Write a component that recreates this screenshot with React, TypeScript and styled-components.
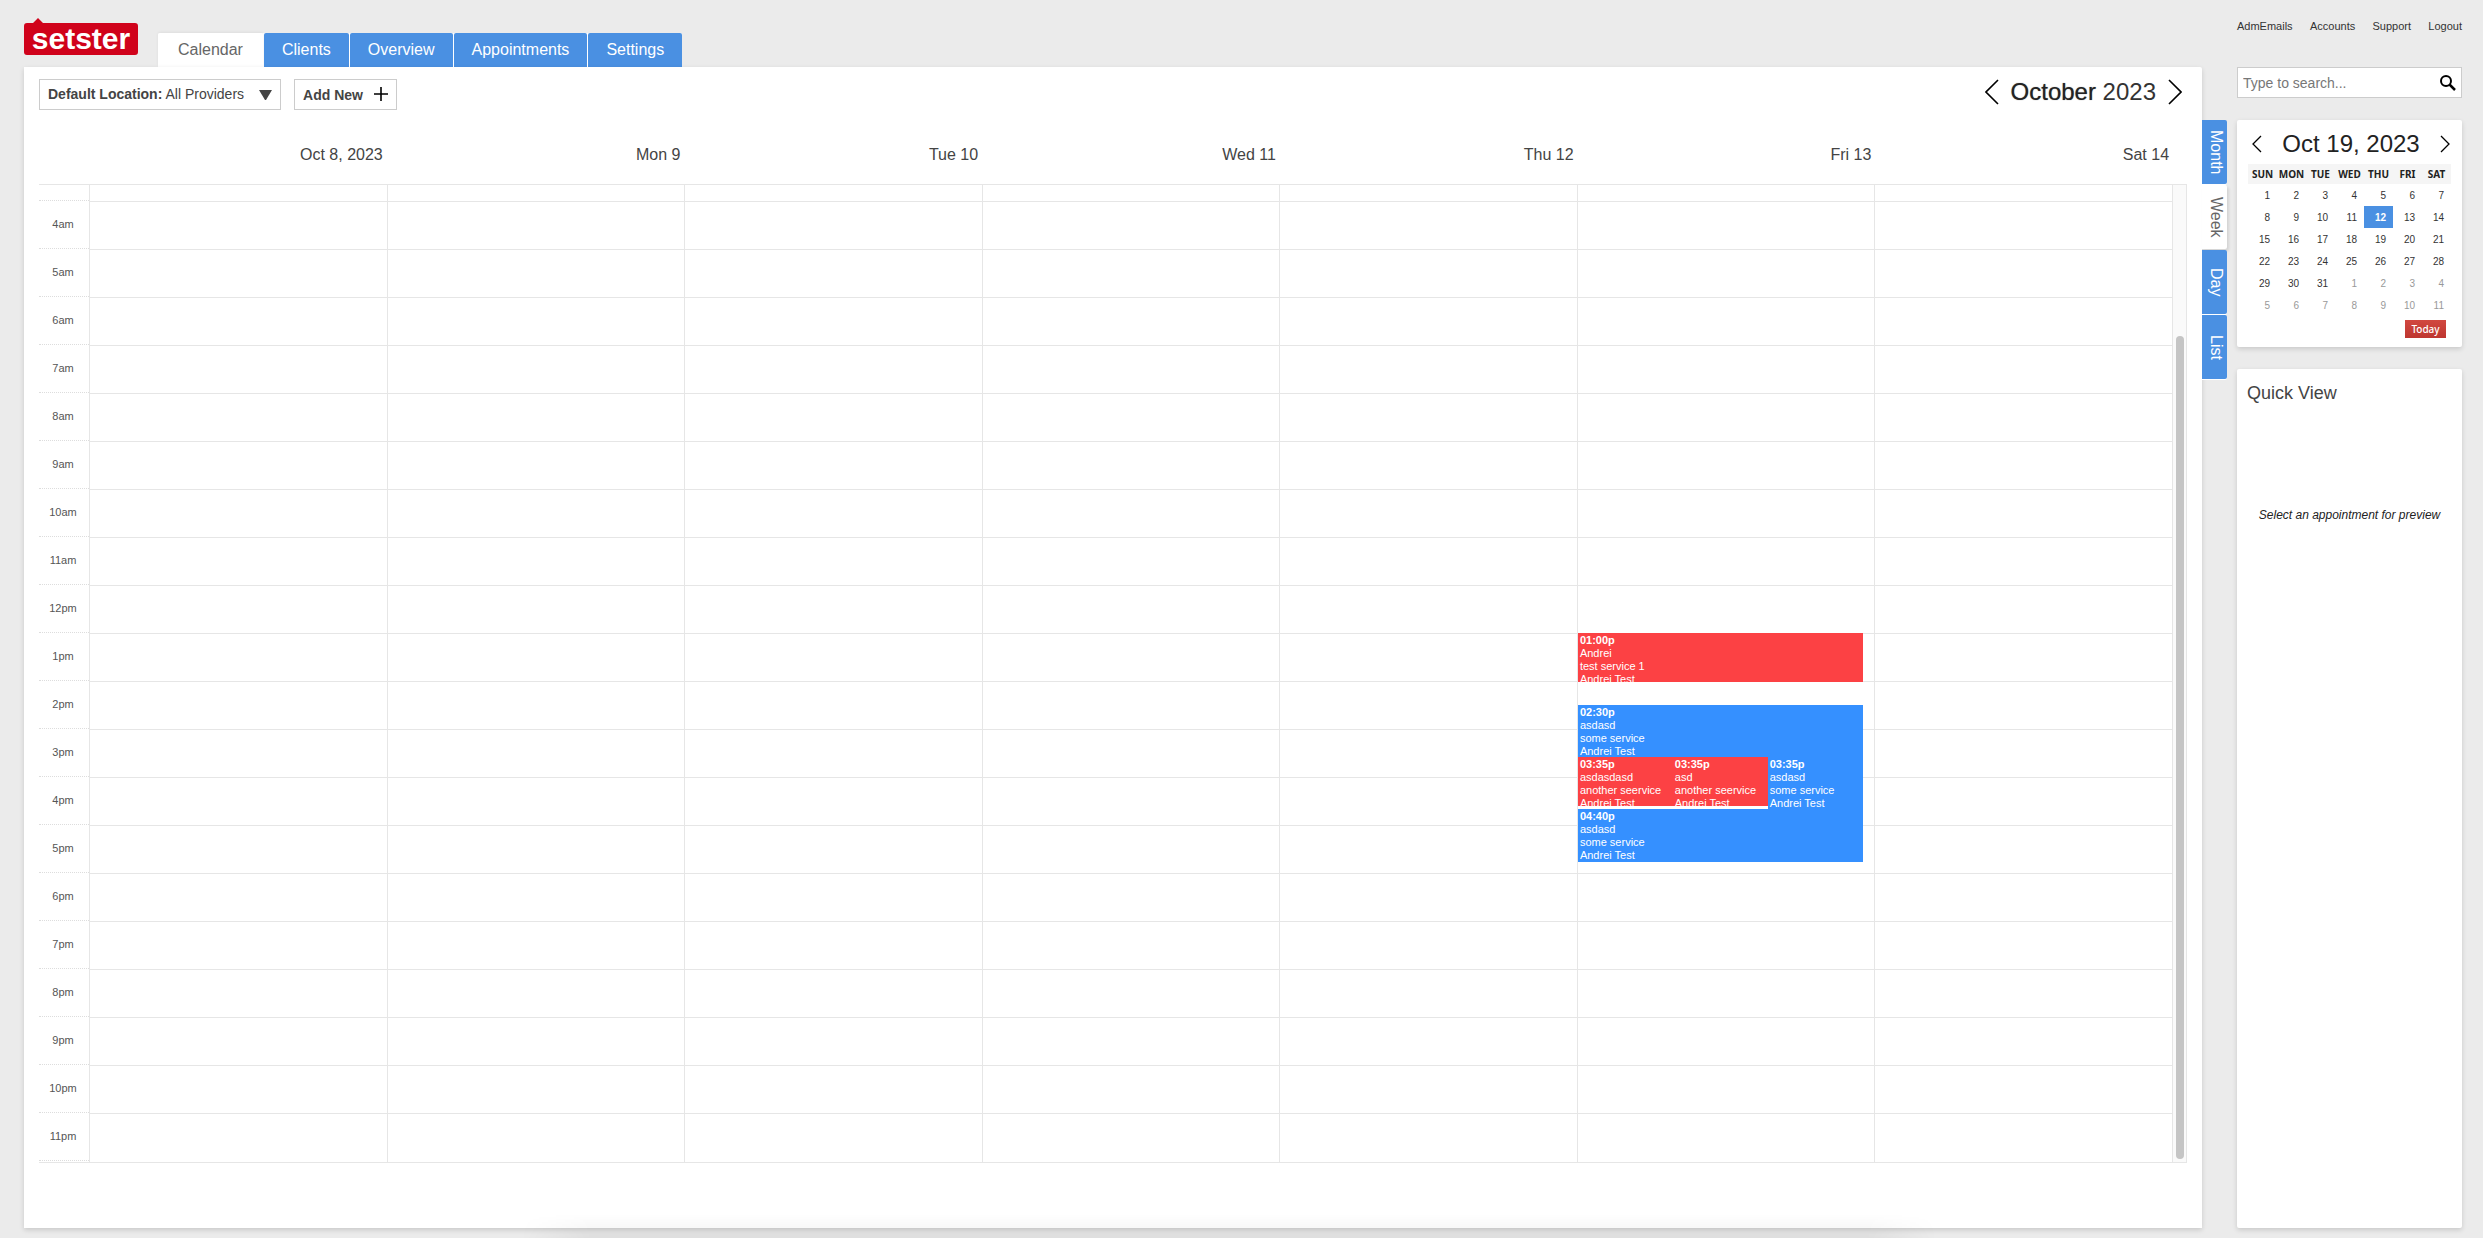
import React from "react";
import styled, { createGlobalStyle, css } from "styled-components";

const GlobalStyle = createGlobalStyle`
  *, *::before, *::after { box-sizing: border-box; }
  body {
    margin: 0;
    background: #ebebeb;
    color: #444;
    font-family: "Liberation Sans", Arial, sans-serif;
    font-size: 11px;
  }
  button, input { font-family: inherit; }
  button { cursor: pointer; }
  a { color: inherit; text-decoration: none; }
`;

const SHADOW = "0 2px 5px rgba(0, 0, 0, 0.15)";
const BLUE = "#4a90e2";
const LINE = "#e6e6e6";
const HOUR = 48;
const FIRST_HOUR = 4;
const LEAD = 16;

const Page = styled.div`
  position: relative;
  display: flex;
  min-height: 100vh;
  padding: 0 21px 10px 24px;
  &::after {
    position: absolute;
    right: 22%;
    bottom: 0;
    left: 21%;
    height: 24px;
    background: linear-gradient(transparent, rgba(0, 0, 0, 0.05));
    mask-image: linear-gradient(90deg, transparent, #000 5%, #000 95%, transparent);
    content: "";
    pointer-events: none;
  }
`;

const MainColumn = styled.div`
  display: flex;
  flex: 1;
  flex-direction: column;
  min-width: 0;
`;

const Header = styled.header`
  display: flex;
  align-items: flex-end;
  height: 67px;
`;

const Logo = styled.a`
  display: flex;
  width: 114px;
  margin: 0 20px 12px 0;
`;

const Tabs = styled.nav`
  display: flex;
  gap: 1px;
  border-radius: 2px 2px 0 0;
  background: #fff;
`;

const Tab = styled.a<{ $active?: boolean }>`
  display: flex;
  align-items: center;
  height: 34px;
  padding: 0 ${(p) => (p.$active ? 20 : 18)}px;
  border-radius: 2px 2px 0 0;
  background: ${(p) => (p.$active ? "#fff" : BLUE)};
  box-shadow: ${(p) => (p.$active ? "0 -1px 3px rgba(0, 0, 0, 0.06)" : "none")};
  color: ${(p) => (p.$active ? "#666" : "#fff")};
  font-size: 16px;
`;

const Panel = styled.main`
  display: flex;
  flex: 1;
  flex-direction: column;
  padding: 12px 15px 65px;
  border-radius: 0 2px 0 0;
  background: #fff;
  box-shadow: ${SHADOW};
`;

const Toolbar = styled.div`
  display: flex;
  align-items: center;
  gap: 13px;
  height: 31px;
`;

const BoxButton = styled.button`
  display: flex;
  align-items: center;
  height: 31px;
  padding: 0 8px 2px;
  border: 1px solid #ccc;
  background: #fff;
  color: #444;
  font-size: 14px;
  white-space: pre;
  svg { margin: 2px 0 0 15px; }
`;

const AddButton = styled(BoxButton)`
  padding-bottom: 0;
  font-weight: bold;
  svg { margin: 0 0 2px 11px; }
`;

const MonthNav = styled.div`
  display: flex;
  align-items: center;
  align-self: flex-start;
  gap: 12px;
  margin: 0 5px 0 auto;
`;

const MonthTitle = styled.h1`
  margin: 0;
  color: #333;
  font-size: 24px;
  font-weight: normal;
  line-height: 26px;
  span {
    color: #222;
    text-shadow: 0 0 1px #777;
  }
`;

const IconButton = styled.button`
  display: flex;
  padding: 0;
  border: 0;
  background: none;
  color: #000;
`;

const DayHeads = styled.div`
  display: flex;
  height: 74px;
  padding: 0 18px 0 46px;
  span {
    flex: 1;
    color: #444;
    font-size: 16px;
    line-height: 90px;
    text-align: right;
  }
`;

const Grid = styled.div`
  display: flex;
  border: solid ${LINE};
  border-width: 1px 0;
`;

const Hours = styled.div`
  width: 50px;
`;

const HourLabel = styled.div<{ $lead?: boolean }>`
  height: ${(p) => (p.$lead ? LEAD : HOUR)}px;
  padding-right: 2px;
  border-bottom: 1px dotted #ddd;
  color: #555;
  font-size: 11px;
  line-height: 46px;
  text-align: center;
`;

const Day = styled.div`
  position: relative;
  flex: 1;
  border-left: 1px solid ${LINE};
`;

const Slot = styled.div<{ $lead?: boolean }>`
  height: ${(p) => (p.$lead ? LEAD : HOUR)}px;
  ${(p) => !p.$lead && css`border-top: 1px solid ${LINE};`}
  &:last-child { height: ${HOUR + 1}px; }
`;

const EventBox = styled.button<{ $red?: boolean }>`
  position: absolute;
  display: block;
  height: ${(p) => (p.$red ? 49 : 53)}px;
  padding: 1px 2px 0;
  border: 0;
  overflow: hidden;
  background: ${(p) => (p.$red ? "#fc4144" : "#3590ff")};
  color: #fff;
  font-size: 11px;
  line-height: 13px;
  text-align: left;
  span, b {
    display: block;
    white-space: nowrap;
  }
`;

const EventText = styled.span`
  height: 52px;
`;

const ScrollTrack = styled.div`
  display: flex;
  flex-direction: column;
  justify-content: flex-end;
  width: 15px;
  padding: 0 2px 3px 3px;
  border: solid ${LINE};
  border-width: 0 1px;
  background: #fafafa;
`;

const ScrollThumb = styled.div`
  height: 84.5%;
  border-radius: 4px;
  background: #c5c5c5;
`;

const ViewTabs = styled.nav`
  display: flex;
  flex-direction: column;
  gap: 1px;
  width: 25px;
  margin: 120px 10px 0 0;
`;

const ViewTab = styled.a<{ $active?: boolean }>`
  display: flex;
  align-items: center;
  justify-content: center;
  width: 25px;
  height: 64px;
  padding-left: 2px;
  border-radius: 0 2px 2px 0;
  background: ${(p) => (p.$active ? "#fff" : BLUE)};
  box-shadow: ${(p) => (p.$active ? "2px 2px 3px rgba(0, 0, 0, 0.1)" : "0 1px 0 #fff")};
  color: ${(p) => (p.$active ? "#666" : "#fff")};
  font-size: 16px;
  writing-mode: vertical-rl;
`;

const Side = styled.aside`
  display: flex;
  flex-direction: column;
  width: 225px;
`;

const UserLinks = styled.nav`
  display: flex;
  justify-content: space-between;
  height: 67px;
  color: #333;
  font-size: 11px;
  line-height: 53px;
`;

const Search = styled.form`
  display: flex;
  align-items: center;
  height: 31px;
  margin-bottom: 22px;
  padding: 0 5px;
  border: 1px solid #ccc;
  background: #fff;
`;

const SearchInput = styled.input`
  flex: 1;
  min-width: 0;
  padding: 0;
  border: 0;
  outline: 0;
  background: none;
  color: #444;
  font-size: 14px;
  &::placeholder { color: #777; }
`;

const Card = styled.section<{ $grow?: boolean }>`
  flex: ${(p) => (p.$grow ? 1 : "none")};
  margin-bottom: ${(p) => (p.$grow ? 0 : 22)}px;
  padding: ${(p) => (p.$grow ? "11px 10px" : "10px 11px 9px")};
  border-radius: 2px;
  background: #fff;
  box-shadow: ${SHADOW};
`;

const MiniHead = styled.div`
  display: flex;
  align-items: center;
  justify-content: space-between;
  height: 34px;
  padding: 0 1px 6px 4px;
  color: #222;
  font-size: 24px;
`;

const MiniTable = styled.table`
  width: 100%;
  border-collapse: collapse;
  table-layout: fixed;
  th {
    height: 20px;
    padding: 0;
    background: #f5f5f5;
    color: #222;
    font: bold 10px/20px "Noto Sans", sans-serif;
    text-align: center;
  }
`;

const MiniDay = styled.td<{ $other: boolean; $selected: boolean }>`
  height: 22px;
  padding: 0 7px 0 0;
  background: ${(p) => (p.$selected ? BLUE : "none")};
  color: ${(p) => (p.$selected ? "#fff" : p.$other ? "#999" : "#333")};
  font-size: 10px;
  font-weight: ${(p) => (p.$selected ? "bold" : "normal")};
  text-align: right;
`;

const TodayButton = styled.button`
  display: block;
  width: 41px;
  height: 18px;
  margin: 4px 5px 0 auto;
  padding: 0;
  border: 0;
  background: linear-gradient(#d14840, #be3630);
  color: #fff;
  font: 500 10px/18px "Noto Sans", sans-serif;
`;

const QuickTitle = styled.h2`
  margin: 0;
  color: #444;
  font-size: 18px;
  font-weight: normal;
  line-height: 26px;
`;

const QuickHint = styled.p`
  margin: 100px 0 0;
  color: #222;
  font-size: 12px;
  font-style: italic;
  line-height: 18px;
  text-align: center;
`;

function Chevron({ width, height, right }: { width: number; height: number; right?: boolean }) {
  const d = right
    ? `M1 1L${width - 1} ${height / 2}L1 ${height - 1}`
    : `M${width - 1} 1L1 ${height / 2}L${width - 1} ${height - 1}`;
  return (
    <svg width={width} height={height} fill="none" stroke="currentColor" strokeWidth={height > 20 ? 1.6 : 1.3} aria-hidden>
      <path d={d} />
    </svg>
  );
}

const NAV = ["Calendar", "Clients", "Overview", "Appointments", "Settings"];
const VIEWS = ["Month", "Week", "Day", "List"];
const DAYS = ["Oct 8, 2023", "Mon 9", "Tue 10", "Wed 11", "Thu 12", "Fri 13", "Sat 14"];
const WEEKDAYS = ["SUN", "MON", "TUE", "WED", "THU", "FRI", "SAT"];
const HOURS = Array.from({ length: 20 }, (_, i) => i + FIRST_HOUR);

type Appointment = {
  day: number;
  minutes: number;
  time: string;
  client: string;
  service: string;
  red?: boolean;
  lane?: number;
  lanes?: number;
};

const APPOINTMENTS: Appointment[] = [
  { day: 5, minutes: 780, time: "01:00p", client: "Andrei", service: "test service 1", red: true },
  { day: 5, minutes: 870, time: "02:30p", client: "asdasd", service: "some service" },
  { day: 5, minutes: 935, time: "03:35p", client: "asdasdasd", service: "another seervice", red: true, lane: 0, lanes: 3 },
  { day: 5, minutes: 935, time: "03:35p", client: "asd", service: "another seervice", red: true, lane: 1, lanes: 3 },
  { day: 5, minutes: 935, time: "03:35p", client: "asdasd", service: "some service", lane: 2, lanes: 3 },
  { day: 5, minutes: 1000, time: "04:40p", client: "asdasd", service: "some service" },
];

const DAY_FILL = 96;

const hourLabel = (h: number) => (h < 12 ? `${h}am` : `${h === 12 ? 12 : h - 12}pm`);

function Appt({ item }: { item: Appointment }) {
  const { lane = 0, lanes = 1 } = item;
  const left = Math.round((lane * DAY_FILL * 10) / lanes) / 10;
  return (
    <EventBox
      type="button"
      $red={item.red}
      style={{
        top: LEAD + ((item.minutes - FIRST_HOUR * 60) / 60) * HOUR,
        left: `${left}%`,
        width: `${DAY_FILL / lanes}%`,
      }}
    >
      <EventText>
        <b>{item.time}</b>
        <span>{item.client}</span>
        <span>{item.service}</span>
        <span>Andrei Test</span>
      </EventText>
    </EventBox>
  );
}

function MiniCalendar() {
  const weeks = Array.from({ length: 6 }, (_, w) => Array.from({ length: 7 }, (_, d) => w * 7 + d + 1));
  return (
    <Card>
      <MiniHead>
        <IconButton type="button" aria-label="Previous month"><Chevron width={10} height={18} /></IconButton>
        <span>Oct 19, 2023</span>
        <IconButton type="button" aria-label="Next month"><Chevron width={10} height={18} right /></IconButton>
      </MiniHead>
      <MiniTable>
        <thead>
          <tr>{WEEKDAYS.map((d) => <th key={d} scope="col">{d}</th>)}</tr>
        </thead>
        <tbody>
          {weeks.map((week) => (
            <tr key={week[0]}>
              {week.map((n) => (
                <MiniDay key={n} $other={n > 31} $selected={n === 12}>{n > 31 ? n - 31 : n}</MiniDay>
              ))}
            </tr>
          ))}
        </tbody>
      </MiniTable>
      <TodayButton type="button">Today</TodayButton>
    </Card>
  );
}

export default function App() {
  return (
    <>
      <GlobalStyle />
      <Page>
        <MainColumn>
          <Header>
            <Logo href="#" aria-label="setster home">
              <svg width="114" height="37" viewBox="0 0 114 37">
                <path d="M3 5H9L14 0L19 5H111Q114 5 114 8V34Q114 37 111 37H3Q0 37 0 34V8Q0 5 3 5Z" fill="#d0021b" />
                <text x="57" y="31" textAnchor="middle" fill="#fff" fontFamily="Liberation Sans, Arial, sans-serif" fontSize="30" fontWeight="bold">setster</text>
              </svg>
            </Logo>
            <Tabs>
              {NAV.map((n, i) => <Tab key={n} href="#" $active={i === 0}>{n}</Tab>)}
            </Tabs>
          </Header>
          <Panel>
            <Toolbar>
              <BoxButton type="button">
                <b>Default Location:</b> All Providers
                <svg width="13" height="10" aria-hidden><path d="M0 0H13L7 10H6Z" fill="#444" /></svg>
              </BoxButton>
              <AddButton type="button">
                Add New
                <svg width="14" height="14" stroke="#000" strokeWidth="1.6" aria-hidden><path d="M7 0V14M0 7H14" /></svg>
              </AddButton>
              <MonthNav>
                <IconButton type="button" aria-label="Previous"><Chevron width={14} height={26} /></IconButton>
                <MonthTitle><span>October</span> 2023</MonthTitle>
                <IconButton type="button" aria-label="Next"><Chevron width={14} height={26} right /></IconButton>
              </MonthNav>
            </Toolbar>
            <DayHeads>{DAYS.map((d) => <span key={d}>{d}</span>)}</DayHeads>
            <Grid>
              <Hours>
                <HourLabel $lead />
                {HOURS.map((h) => <HourLabel key={h}>{hourLabel(h)}</HourLabel>)}
              </Hours>
              {DAYS.map((d, i) => (
                <Day key={d}>
                  <Slot $lead />
                  {HOURS.map((h) => <Slot key={h} />)}
                  {APPOINTMENTS.filter((a) => a.day === i).map((a) => (
                    <Appt key={`${a.minutes}-${a.lane}`} item={a} />
                  ))}
                </Day>
              ))}
              <ScrollTrack><ScrollThumb /></ScrollTrack>
            </Grid>
          </Panel>
        </MainColumn>
        <ViewTabs>
          {VIEWS.map((v) => <ViewTab key={v} href="#" $active={v === "Week"}>{v}</ViewTab>)}
        </ViewTabs>
        <Side>
          <UserLinks>
            {["AdmEmails", "Accounts", "Support", "Logout"].map((l) => <a key={l} href="#">{l}</a>)}
          </UserLinks>
          <Search>
            <SearchInput type="text" aria-label="Search" placeholder="Type to search..." />
            <IconButton type="submit" aria-label="Search">
              <svg width="16" height="16" fill="none" stroke="#000" aria-hidden>
                <circle cx="6" cy="6" r="5" strokeWidth="2" />
                <path d="M9.500 9.500L15 15" strokeWidth="2.500" />
              </svg>
            </IconButton>
          </Search>
          <MiniCalendar />
          <Card $grow>
            <QuickTitle>Quick View</QuickTitle>
            <QuickHint>Select an appointment for preview</QuickHint>
          </Card>
        </Side>
      </Page>
    </>
  );
}
